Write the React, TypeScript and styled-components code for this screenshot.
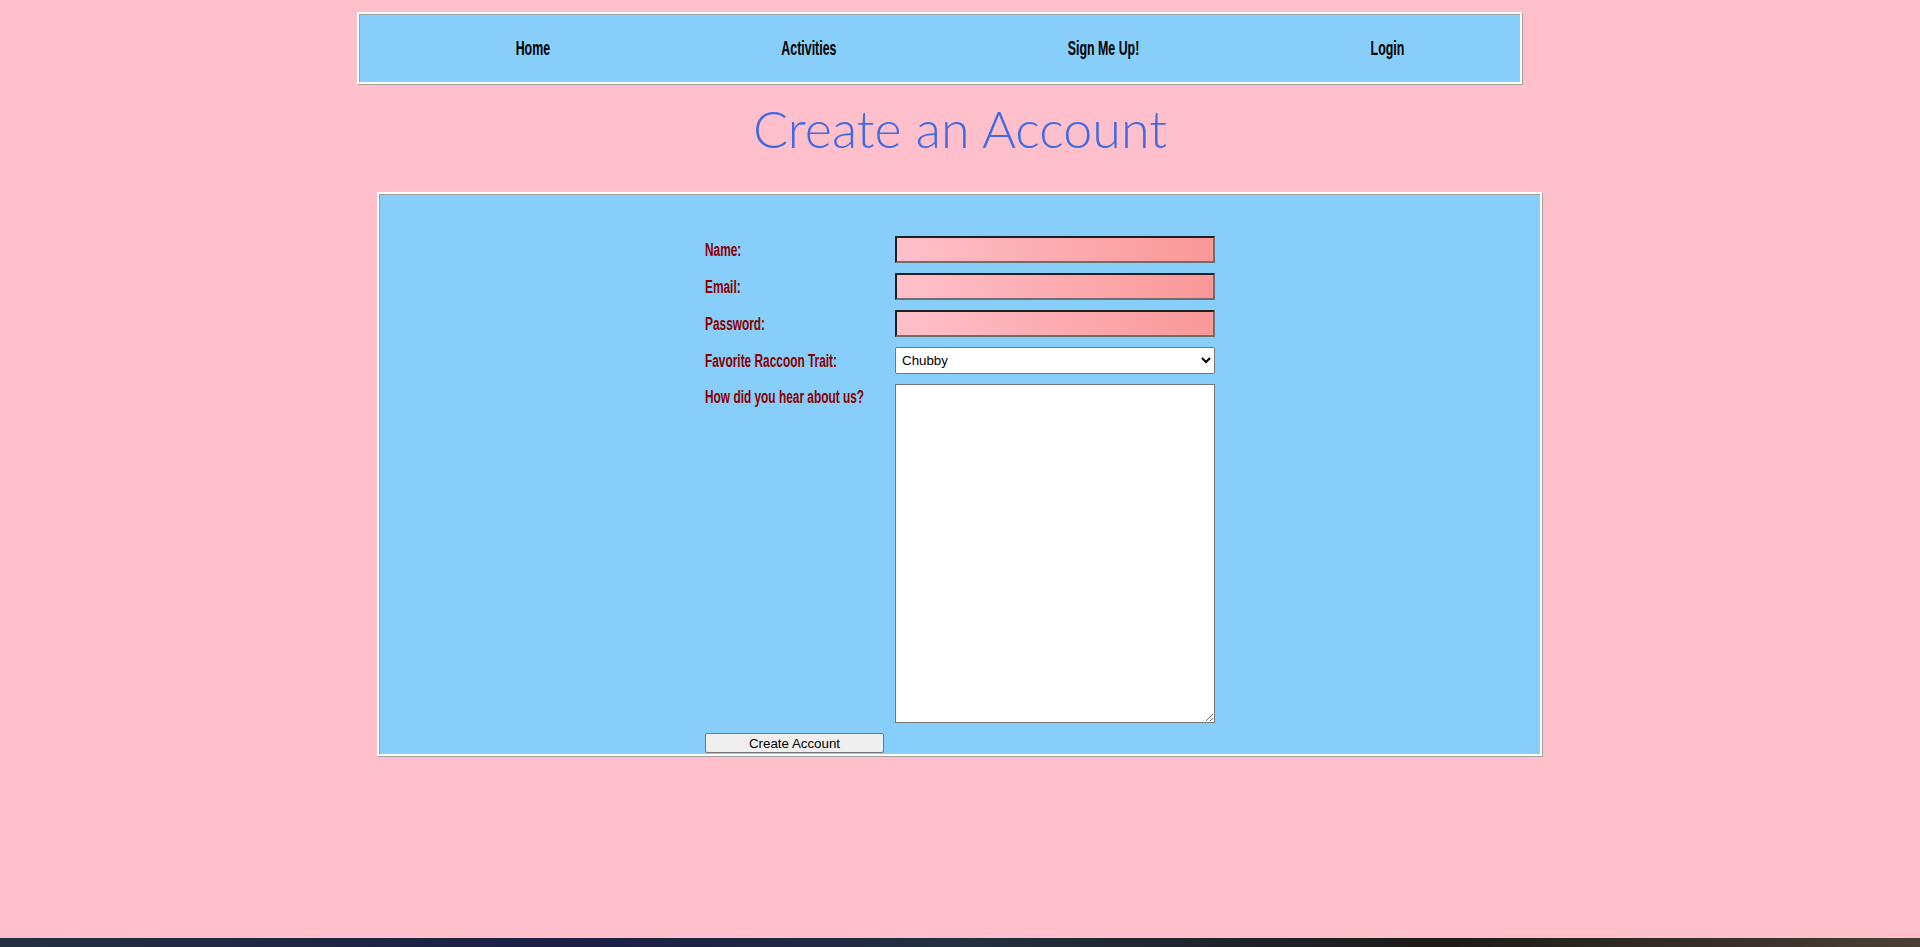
import React from "react";
import styled, { createGlobalStyle } from "styled-components";

const GlobalStyle = createGlobalStyle`
  html, body {
    margin: 0;
    padding: 0;
    background: #ffc0cb;
  }
  * { box-sizing: border-box; }
`;

const condensed = `"Liberation Sans", Arial, sans-serif`;

const Page = styled.div`
  min-height: 100vh;
  display: flex;
  flex-direction: column;
  background: #ffc0cb;
`;

const Framed = styled.div`
  width: 1166px;
  border: 1px solid;
  border-color: #ffffff #a0a0a0 #a0a0a0 #ffffff;
  padding: 1px;
  background: #ffffff;
`;

const FramedInner = styled.div`
  border: 1px solid;
  border-color: #a0a0a0 #ffffff #ffffff #a0a0a0;
  background: #87cefa;
  height: 100%;
`;

const NavFrame = styled(Framed)`
  margin: 12px 0 0 calc(50% - 603px);
  height: 73px;
`;

const NavList = styled.ul`
  list-style: none;
  margin: 0;
  padding: 0 0 0 40px;
  height: 100%;
  display: flex;
  justify-content: space-around;
  align-items: center;
`;

const NavItem = styled.li`
  font-family: ${condensed};
  font-weight: bold;
  font-size: 12.4px;
  line-height: 14px;
  color: #000;
  white-space: nowrap;
  transform: scaleY(1.58);
  transform-origin: center center;
`;

const Title = styled.h1`
  margin: 12px 0 33px;
  text-align: center;
  font-family: Lato, "Liberation Sans", sans-serif;
  font-weight: 300;
  font-size: 52px;
  line-height: 62px;
  color: #4169e1;
`;

const FormFrame = styled(Framed)`
  margin: 0 auto;
  height: 565px;
`;

const FormGrid = styled.form`
  display: grid;
  grid-template-columns: 190px 320px;
  justify-content: center;
  row-gap: 10px;
  align-items: center;
  padding-top: 41px;
`;

const Label = styled.label<{ $top?: boolean }>`
  font-family: ${condensed};
  font-weight: bold;
  font-size: 18px;
  line-height: 20px;
  color: #8b0000;
  white-space: nowrap;
  transform: scaleX(0.66);
  transform-origin: left center;
  align-self: ${(p) => (p.$top ? "start" : "center")};
  padding-top: ${(p) => (p.$top ? "3px" : "0")};
`;

const TextInput = styled.input`
  height: 27px;
  width: 320px;
  border: 2px solid;
  border-color: #1e1e1e #6e6e6e #6e6e6e #1e1e1e;
  background: linear-gradient(to right, #ffc0cb, #fa9898);
  padding: 0 4px;
  font-family: Arial, "Liberation Sans", sans-serif;
  font-size: 13.33px;
  outline: none;
`;

const Select = styled.select`
  height: 27px;
  width: 320px;
  border: 1px solid #767676;
  border-radius: 2px;
  background: #fff;
  font-family: Arial, "Liberation Sans", sans-serif;
  font-size: 13.33px;
  color: #000;
  padding: 0 2px;
`;

const TextArea = styled.textarea`
  height: 339px;
  width: 320px;
  border: 1px solid #767676;
  background: #fff;
  font-family: monospace;
  font-size: 13.33px;
`;

const SubmitButton = styled.button`
  width: 179px;
  height: 20px;
  border: 1px solid #767676;
  border-radius: 2px;
  background: #efefef;
  font-family: Arial, "Liberation Sans", sans-serif;
  font-size: 13.33px;
  color: #000;
  padding: 0;
`;

const Taskbar = styled.div`
  margin-top: auto;
  height: 9px;
  background: linear-gradient(90deg, #22303f 0%, #1b1e46 30%, #22303e 50%, #1c1a18 75%, #4a4036 100%);
`;

export default function App() {
  return (
    <Page>
      <GlobalStyle />
      <NavFrame>
        <FramedInner>
          <NavList>
            <NavItem>Home</NavItem>
            <NavItem>Activities</NavItem>
            <NavItem>Sign Me Up!</NavItem>
            <NavItem>Login</NavItem>
          </NavList>
        </FramedInner>
      </NavFrame>
      <Title>Create an Account</Title>
      <FormFrame>
        <FramedInner>
          <FormGrid onSubmit={(e) => e.preventDefault()}>
            <Label htmlFor="name">Name:</Label>
            <TextInput id="name" type="text" />
            <Label htmlFor="email">Email:</Label>
            <TextInput id="email" type="email" />
            <Label htmlFor="password">Password:</Label>
            <TextInput id="password" type="password" />
            <Label htmlFor="trait">Favorite Raccoon Trait:</Label>
            <Select id="trait" defaultValue="Chubby">
              <option>Chubby</option>
              <option>Masked</option>
              <option>Fluffy tail</option>
              <option>Tiny hands</option>
            </Select>
            <Label htmlFor="hear" $top>How did you hear about us?</Label>
            <TextArea id="hear" />
            <SubmitButton type="submit">Create Account</SubmitButton>
          </FormGrid>
        </FramedInner>
      </FormFrame>
      <Taskbar />
    </Page>
  );
}
